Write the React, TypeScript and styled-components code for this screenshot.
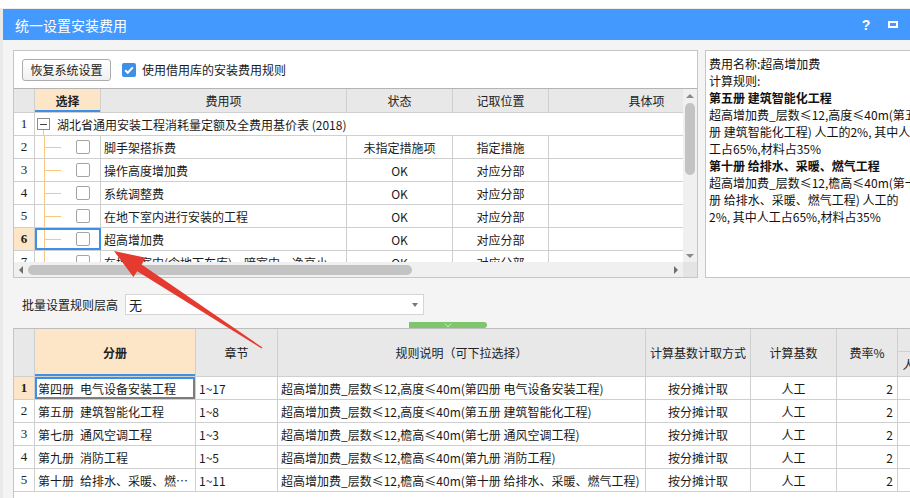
import React from "react";
import styled, { createGlobalStyle, css } from "styled-components";

const FONT = `"Noto Sans CJK SC", "Liberation Sans", sans-serif`;
const LINE = "#cfcfcf";
const HEAD_BG = "#e8e8e8";
const PEACH = "#fde6c8";
const BLUE = "#3d8fe8";
const TREE = "#f6c77f";

const GlobalStyle = createGlobalStyle`
  * { box-sizing: border-box; }
  html, body { margin: 0; padding: 0; background: #ffffff; }
  body { font-family: ${FONT}; font-size: 12px; color: #1e1e1e; }
`;

const Screen = styled.div`
  position: relative;
  width: 910px;
  height: 498px;
  overflow: hidden;
  display: flex;
  flex-direction: column;
  background: #ffffff;
`;

const BackdropBar = styled.div`
  flex: none;
  height: 9px;
  background: #ffffff;
  border-bottom: 1px solid #eeeeee;
`;

const Stage = styled.div`
  flex: 1;
  min-height: 0;
  display: flex;
`;

const BackdropSide = styled.div`
  flex: none;
  width: 3px;
  background: #e9e9e9;
`;

const Dialog = styled.div`
  flex: none;
  width: 943px;
  display: flex;
  flex-direction: column;
  background: #f4f4f4;
`;

const TitleBar = styled.div`
  flex: none;
  height: 31px;
  display: flex;
  align-items: center;
  padding-left: 12px;
  background: #4499ff;
  color: #ffffff;
  font-size: 14px;
`;

const TitleActions = styled.div`
  margin-left: auto;
  height: 100%;
  display: flex;
  align-items: center;
  padding-right: 40px;
`;

const HelpButton = styled.div`
  width: 20px;
  margin-right: 4px;
  text-align: center;
  font-family: "Liberation Sans", sans-serif;
  font-weight: bold;
  font-size: 14px;
`;

const MaxButton = styled.div`
  width: 26px;
  display: flex;
  justify-content: center;
`;

const MaxGlyph = styled.div`
  width: 10px;
  height: 7px;
  border: 2px solid #ffffff;
`;

const DialogBody = styled.div`
  flex: 1;
  min-height: 0;
  display: flex;
  flex-direction: column;
  padding: 10px 0 0 10px;
`;

const TopSection = styled.div`
  flex: none;
  height: 228px;
  display: flex;
  gap: 7px;
`;

const FeePanel = styled.div`
  flex: none;
  width: 685px;
  display: flex;
  flex-direction: column;
  background: #ffffff;
  border: 1px solid #c6c6c6;
`;

const Toolbar = styled.div`
  flex: none;
  height: 37px;
  display: flex;
  align-items: center;
  gap: 11px;
  padding-left: 8px;
`;

const Button = styled.button`
  width: 89px;
  height: 22px;
  padding: 0;
  border: 1px solid #acacac;
  border-radius: 3px;
  background: linear-gradient(#ffffff, #f0f0f0);
  font-family: ${FONT};
  font-size: 12px;
  color: #222222;
`;

const CheckLabel = styled.label`
  display: flex;
  align-items: center;
  gap: 6px;
  font-size: 12px;
  color: #1a1a1a;
`;

const CheckMark = styled.span`
  width: 14px;
  height: 14px;
  border-radius: 2px;
  background: ${BLUE};
  display: grid;
  place-items: center;
`;

const TreeGrid = styled.div`
  flex: 1;
  min-height: 0;
  display: flex;
  flex-direction: column;
  border-top: 1px solid #b4b4b4;
`;

const GridMain = styled.div`
  flex: 1;
  min-height: 0;
  display: flex;
`;

const Viewport = styled.div`
  flex: 1;
  min-width: 0;
  overflow: hidden;
`;

const TREE_COLS = "21px 66px 246px 106px 96px 196px";

const HeaderRow = styled.div<{ $cols: string; $rows?: string; $height: number }>`
  display: grid;
  grid-template-columns: ${(p) => p.$cols};
  ${(p) => p.$rows && css`grid-template-rows: ${p.$rows};`}
  height: ${(p) => p.$height}px;
  border-bottom: 1px solid ${LINE};
`;

const HeadCell = styled.div<{ $active?: boolean; $row?: string; $col?: string; $divide?: boolean }>`
  display: flex;
  align-items: center;
  justify-content: center;
  background: ${HEAD_BG};
  border-right: 1px solid ${LINE};
  white-space: nowrap;
  overflow: hidden;
  color: #222222;
  ${(p) => p.$row && css`grid-row: ${p.$row};`}
  ${(p) => p.$col && css`grid-column: ${p.$col};`}
  ${(p) => p.$divide && css`border-bottom: 1px solid ${LINE};`}
  ${(p) =>
    p.$active &&
    css`
      background: ${PEACH};
      font-weight: bold;
      box-shadow: inset 0 -2px 0 ${BLUE};
    `}
`;

const Row = styled.div<{ $cols: string }>`
  display: grid;
  grid-template-columns: ${(p) => p.$cols};
  height: 23px;
  border-bottom: 1px solid ${LINE};
`;

const Cell = styled.div<{ $align?: "left" | "center" | "right"; $editing?: boolean }>`
  min-width: 0;
  display: flex;
  align-items: center;
  justify-content: ${(p) =>
    p.$align === "center" ? "center" : p.$align === "right" ? "flex-end" : "flex-start"};
  padding: 0 ${(p) => (p.$align === "right" ? "4px" : "3px")} 0 3px;
  border-right: 1px solid ${LINE};
  white-space: nowrap;
  overflow: hidden;
  color: #1a1a1a;
  ${(p) =>
    p.$editing &&
    css`
      box-shadow: inset 2px 2px 0 ${BLUE}, inset -2px -2px 0 #7d7d7d;
    `}
`;

const CellText = styled.span`
  overflow: hidden;
  text-overflow: ellipsis;
`;

const NumCell = styled.div<{ $current?: boolean }>`
  display: flex;
  align-items: center;
  justify-content: center;
  border-right: 1px solid ${LINE};
  font-family: "Liberation Serif", serif;
  font-size: 13px;
  color: #222222;
  ${(p) =>
    p.$current &&
    css`
      background: ${PEACH};
      font-weight: bold;
    `}
`;

const GroupCell = styled.div`
  grid-column: 2 / -1;
  display: flex;
  align-items: stretch;
  padding-left: 2px;
  white-space: nowrap;
`;

const ToggleWrap = styled.div`
  width: 13px;
  display: flex;
  flex-direction: column;
  align-items: center;
  padding-top: 5px;
`;

const ToggleBox = styled.div`
  width: 13px;
  height: 12px;
  border: 1px solid #8c8c8c;
  background: #ffffff;
  display: grid;
  place-items: center;
  &::after {
    content: "";
    width: 7px;
    height: 1px;
    background: #444444;
  }
`;

const ToggleStem = styled.div`
  flex: 1;
  width: 1px;
  background: ${TREE};
`;

const GroupText = styled.span`
  align-self: center;
  margin-left: 7px;
  color: #1a1a1a;
`;

const SelectCell = styled.div<{ $focused?: boolean }>`
  display: flex;
  align-items: stretch;
  padding-left: 9px;
  border-right: 1px solid ${LINE};
  ${(p) =>
    p.$focused &&
    css`
      outline: 2px solid ${BLUE};
      outline-offset: -2px;
    `}
`;

const TreeBranch = styled.div`
  width: 17px;
  border-left: 1px solid ${TREE};
  background: linear-gradient(${TREE}, ${TREE}) no-repeat left center / 100% 1px;
`;

const CheckBox = styled.div`
  align-self: center;
  width: 14px;
  height: 14px;
  margin-left: 15px;
  border: 1px solid #a4a4a4;
  border-radius: 2px;
  background: #ffffff;
`;

const VScroll = styled.div`
  flex: none;
  width: 14px;
  display: flex;
  flex-direction: column;
  align-items: center;
  padding: 5px 0 4px;
  background: #f0f0f0;
`;

const ArrowUp = styled.div`
  width: 0;
  height: 0;
  border-left: 4px solid transparent;
  border-right: 4px solid transparent;
  border-bottom: 4px solid #8a8a8a;
`;

const ArrowDown = styled.div`
  margin-top: auto;
  width: 0;
  height: 0;
  border-left: 4px solid transparent;
  border-right: 4px solid transparent;
  border-top: 4px solid #8a8a8a;
`;

const VThumb = styled.div`
  margin-top: 5px;
  width: 10px;
  height: 72px;
  border-radius: 5px;
  background: #c3c3c3;
`;

const HScroll = styled.div`
  flex: none;
  height: 15px;
  display: flex;
  align-items: center;
  background: #f0f0f0;
`;

const ArrowBox = styled.div`
  width: 14px;
  height: 100%;
  display: grid;
  place-items: center;
`;

const ArrowLeft = styled.div`
  width: 0;
  height: 0;
  border-top: 4px solid transparent;
  border-bottom: 4px solid transparent;
  border-right: 4px solid #6e6e6e;
`;

const ArrowRight = styled.div`
  width: 0;
  height: 0;
  border-top: 4px solid transparent;
  border-bottom: 4px solid transparent;
  border-left: 4px solid #6e6e6e;
`;

const HThumb = styled.div`
  width: 384px;
  height: 10px;
  border-radius: 5px;
  background: #c3c3c3;
`;

const Spacer = styled.div`
  flex: 1;
`;

const Corner = styled.div`
  width: 14px;
  height: 100%;
  background: #e4e4e4;
`;

const InfoPanel = styled.div`
  flex: 1;
  min-width: 0;
  overflow: hidden;
  padding: 4px 0 0 3px;
  background: #ffffff;
  border: 1px solid #c6c6c6;
`;

const InfoLine = styled.div<{ $bold?: boolean }>`
  line-height: 17px;
  white-space: nowrap;
  font-size: 12px;
  color: #111111;
  ${(p) => p.$bold && css`font-weight: bold;`}
`;

const BatchRow = styled.div`
  flex: none;
  height: 44px;
  display: flex;
  align-items: flex-start;
  gap: 7px;
  padding: 16px 0 0 9px;
`;

const BatchLabel = styled.span`
  line-height: 21px;
  color: #1a1a1a;
`;

const SelectBox = styled.div`
  width: 299px;
  height: 21px;
  display: flex;
  align-items: center;
  padding: 0 5px 0 3px;
  border: 1px solid #d5d5d5;
  background: #ffffff;
`;

const SelectValue = styled.span`
  flex: 1;
  font-size: 13px;
`;

const Caret = styled.div`
  width: 0;
  height: 0;
  border-left: 3px solid transparent;
  border-right: 3px solid transparent;
  border-top: 4px solid #777777;
`;

const SplitterRow = styled.div`
  flex: none;
  height: 6px;
  display: flex;
  padding-left: 396px;
`;

const SplitHandle = styled.div`
  width: 78px;
  height: 6px;
  display: grid;
  place-items: center;
  background: #7ec56c;
  border-radius: 0 3px 3px 0;
`;

const RuleGrid = styled.div`
  flex: 1;
  min-height: 0;
  overflow: hidden;
  background: #ffffff;
  border-top: 1px solid #bdbdbd;
  border-left: 1px solid #c6c6c6;
`;

const RULE_COLS = "21px 161px 82px 368px 105px 86px 61px 34px 34px";

const Arrow = styled.svg`
  position: absolute;
  left: 0;
  top: 0;
  pointer-events: none;
`;

type FeeRow = { n: number; name: string; state: string; place: string };

const feeRows: FeeRow[] = [
  { n: 2, name: "脚手架搭拆费", state: "未指定措施项", place: "指定措施" },
  { n: 3, name: "操作高度增加费", state: "OK", place: "对应分部" },
  { n: 4, name: "系统调整费", state: "OK", place: "对应分部" },
  { n: 5, name: "在地下室内进行安装的工程", state: "OK", place: "对应分部" },
  { n: 6, name: "超高增加费", state: "OK", place: "对应分部" },
  { n: 7, name: "在地下室内(含地下车库)、暗室内、净高小于1.6m楼层、断面小于4m²且大于2m²的隧道或洞内进行安装的工程", state: "OK", place: "对应分部" },
];

type RuleRow = { n: number; book: string; ch: string; rule: string };

const SP = "\u2002";

const ruleRows: RuleRow[] = [
  { n: 1, book: `第四册${SP}电气设备安装工程`, ch: "1~17", rule: "超高增加费_层数≤12,高度≤40m(第四册 电气设备安装工程)" },
  { n: 2, book: `第五册${SP}建筑智能化工程`, ch: "1~8", rule: "超高增加费_层数≤12,高度≤40m(第五册 建筑智能化工程)" },
  { n: 3, book: `第七册${SP}通风空调工程`, ch: "1~3", rule: "超高增加费_层数≤12,檐高≤40m(第七册 通风空调工程)" },
  { n: 4, book: `第九册${SP}消防工程`, ch: "1~5", rule: "超高增加费_层数≤12,檐高≤40m(第九册 消防工程)" },
  { n: 5, book: `第十册${SP}给排水、采暖、燃气工程`, ch: "1~11", rule: "超高增加费_层数≤12,檐高≤40m(第十册 给排水、采暖、燃气工程)" },
];

const infoLines: { text: string; bold?: boolean }[] = [
  { text: "费用名称:超高增加费" },
  { text: "计算规则:" },
  { text: "第五册 建筑智能化工程", bold: true },
  { text: "超高增加费_层数≤12,高度≤40m(第五" },
  { text: "册 建筑智能化工程) 人工的2%, 其中人" },
  { text: "工占65%,材料占35%" },
  { text: "第十册 给排水、采暖、燃气工程", bold: true },
  { text: "超高增加费_层数≤12,檐高≤40m(第十" },
  { text: "册 给排水、采暖、燃气工程) 人工的" },
  { text: "2%, 其中人工占65%,材料占35%" },
];

export default function App() {
  return (
    <>
      <GlobalStyle />
      <Screen>
        <BackdropBar />
        <Stage>
          <BackdropSide />
          <Dialog>
            <TitleBar>
              <span>统一设置安装费用</span>
              <TitleActions>
                <HelpButton>?</HelpButton>
                <MaxButton>
                  <MaxGlyph />
                </MaxButton>
              </TitleActions>
            </TitleBar>
            <DialogBody>
              <TopSection>
                <FeePanel>
                  <Toolbar>
                    <Button>恢复系统设置</Button>
                    <CheckLabel>
                      <CheckMark>
                        <svg width="14" height="14" viewBox="0 0 14 14">
                          <path d="M3.2 7.2 L5.8 9.8 L10.8 4.4" fill="none" stroke="#ffffff" strokeWidth="2" />
                        </svg>
                      </CheckMark>
                      使用借用库的安装费用规则
                    </CheckLabel>
                  </Toolbar>
                  <TreeGrid>
                    <GridMain>
                      <Viewport>
                        <HeaderRow $cols={TREE_COLS} $height={24}>
                          <HeadCell />
                          <HeadCell $active>选择</HeadCell>
                          <HeadCell>费用项</HeadCell>
                          <HeadCell>状态</HeadCell>
                          <HeadCell>记取位置</HeadCell>
                          <HeadCell>具体项</HeadCell>
                        </HeaderRow>
                        <Row $cols={TREE_COLS}>
                          <NumCell>1</NumCell>
                          <GroupCell>
                            <ToggleWrap>
                              <ToggleBox />
                              <ToggleStem />
                            </ToggleWrap>
                            <GroupText>湖北省通用安装工程消耗量定额及全费用基价表 (2018)</GroupText>
                          </GroupCell>
                        </Row>
                        {feeRows.map((r) => (
                          <Row key={r.n} $cols={TREE_COLS}>
                            <NumCell $current={r.n === 6}>{r.n}</NumCell>
                            <SelectCell $focused={r.n === 6}>
                              <TreeBranch />
                              <CheckBox />
                            </SelectCell>
                            <Cell>
                              <CellText>{r.name}</CellText>
                            </Cell>
                            <Cell $align="center">{r.state}</Cell>
                            <Cell $align="center">{r.place}</Cell>
                            <Cell />
                          </Row>
                        ))}
                      </Viewport>
                      <VScroll>
                        <ArrowUp />
                        <VThumb />
                        <ArrowDown />
                      </VScroll>
                    </GridMain>
                    <HScroll>
                      <ArrowBox>
                        <ArrowLeft />
                      </ArrowBox>
                      <HThumb />
                      <Spacer />
                      <ArrowBox>
                        <ArrowRight />
                      </ArrowBox>
                      <Corner />
                    </HScroll>
                  </TreeGrid>
                </FeePanel>
                <InfoPanel>
                  {infoLines.map((l, i) => (
                    <InfoLine key={i} $bold={l.bold}>
                      {l.text}
                    </InfoLine>
                  ))}
                </InfoPanel>
              </TopSection>

              <BatchRow>
                <BatchLabel>批量设置规则层高</BatchLabel>
                <SelectBox>
                  <SelectValue>无</SelectValue>
                  <Caret />
                </SelectBox>
              </BatchRow>

              <SplitterRow>
                <SplitHandle>
                  <svg width="8" height="5" viewBox="0 0 8 5">
                    <path d="M1 0.5 L4 4 L7 0.5" fill="none" stroke="#c9ecc0" strokeWidth="1" />
                  </svg>
                </SplitHandle>
              </SplitterRow>

              <RuleGrid>
                <HeaderRow $cols={RULE_COLS} $rows="23px 24px" $height={48}>
                  <HeadCell $row="1 / span 2" />
                  <HeadCell $row="1 / span 2" $active>分册</HeadCell>
                  <HeadCell $row="1 / span 2">章节</HeadCell>
                  <HeadCell $row="1 / span 2">规则说明（可下拉选择）</HeadCell>
                  <HeadCell $row="1 / span 2">计算基数计取方式</HeadCell>
                  <HeadCell $row="1 / span 2">计算基数</HeadCell>
                  <HeadCell $row="1 / span 2">费率%</HeadCell>
                  <HeadCell $row="1" $col="8 / span 2" $divide>其中</HeadCell>
                  <HeadCell $row="2" $col="8">人工</HeadCell>
                  <HeadCell $row="2" $col="9">材料</HeadCell>
                </HeaderRow>
                {ruleRows.map((r) => (
                  <Row key={r.n} $cols={RULE_COLS}>
                    <NumCell $current={r.n === 1}>{r.n}</NumCell>
                    <Cell $editing={r.n === 1}>
                      <CellText>{r.book}</CellText>
                    </Cell>
                    <Cell>{r.ch}</Cell>
                    <Cell>
                      <CellText>{r.rule}</CellText>
                    </Cell>
                    <Cell $align="center">按分摊计取</Cell>
                    <Cell $align="center">人工</Cell>
                    <Cell $align="right">2</Cell>
                    <Cell />
                    <Cell />
                  </Row>
                ))}
              </RuleGrid>
            </DialogBody>
          </Dialog>
        </Stage>

        <Arrow width="910" height="498" viewBox="0 0 910 498">
          <polygon
            points="114,251 133.4,277.1 137.2,271.2 261.6,348.5 262.4,347.5 141.6,264.5 145.9,257.8"
            fill="#e53a30"
          />
        </Arrow>
      </Screen>
    </>
  );
}
